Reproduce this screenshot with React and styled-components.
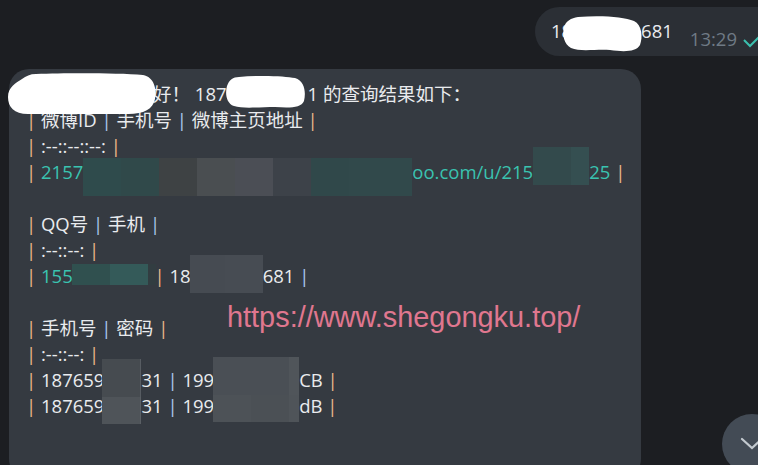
import React from "react";
import styled, { createGlobalStyle } from "styled-components";

const GlobalStyle = createGlobalStyle`
  html, body {
    margin: 0;
    background: #1c1e22;
    overflow: hidden;
  }
`;

const Page = styled.div`
  position: relative;
  width: 758px;
  height: 465px;
  overflow: hidden;
  background: #1c1e22;
  font-family: "Open Sans", "Noto Sans CJK SC", sans-serif;
  font-size: 18.5px;
  color: #e9ebee;
`;

const Chat = styled.div`
  display: flex;
  flex-direction: column;
  padding-top: 7px;
`;

const OutRow = styled.div`
  display: flex;
  justify-content: flex-end;
  margin-right: -36px;
`;

const OutBubble = styled.div`
  display: flex;
  align-items: flex-start;
  box-sizing: border-box;
  height: 49px;
  padding: 11px 30px 0 16px;
  background: #2b2f35;
  border-radius: 25px;
  line-height: 26px;
  white-space: pre;
`;

const Time = styled.span`
  margin-left: 17px;
  margin-top: 8px;
  color: #6f7a85;
`;

const Tick = styled.svg`
  margin-left: 5px;
  margin-top: 14px;
  flex: none;
`;

const InBubble = styled.div`
  box-sizing: border-box;
  width: 632px;
  margin: 13px 0 0 9px;
  padding: 12px 0 60px 17px;
  background: #353a41;
  border-radius: 20px;
`;

const Line = styled.div`
  height: 26px;
  line-height: 26px;
  white-space: pre;
`;

const Pipe = styled.span`
  color: ${(p) => (p.$blue ? "#a9c6ef" : "#ebb68a")};
`;

const Link = styled.span`
  color: #3ac3b0;
`;

const Redact = styled.span`
  position: relative;
  display: inline-block;
  width: ${(p) => p.$w}px;
  height: 0;
`;

const MosaicBox = styled.span`
  position: absolute;
  left: ${(p) => p.$x}px;
  top: ${(p) => p.$y}px;
  display: grid;
  grid-template-columns: ${(p) => p.$cols.map((c) => c + "px").join(" ")};
  grid-template-rows: ${(p) => p.$rows.map((r) => r + "px").join(" ")};
  z-index: 2;
`;

const Tile = styled.span`
  background: ${(p) => p.$c};
`;

const Blot = styled.svg`
  position: absolute;
  left: ${(p) => p.$x}px;
  top: ${(p) => p.$y}px;
  z-index: 2;
`;

const Watermark = styled.div`
  position: absolute;
  left: 227px;
  top: 303px;
  font-family: "Liberation Sans", Arial, sans-serif;
  font-size: 28.9px;
  line-height: 1;
  color: #e0778f;
  white-space: nowrap;
`;

const ScrollDown = styled.div`
  position: absolute;
  left: 722px;
  top: 414px;
  width: 60px;
  height: 60px;
  border-radius: 50%;
  background: #434b55;
  display: flex;
  justify-content: center;
  padding-top: 22px;
  box-sizing: border-box;
`;

const Mosaic = ({ x, y, cols, rows, colors }) => (
  <MosaicBox $x={x} $y={y} $cols={cols} $rows={rows}>
    {colors.map((c, i) => (
      <Tile key={i} $c={c} />
    ))}
  </MosaicBox>
);

const WhiteBlot = ({ x, y, w, h, d }) => (
  <Blot $x={x} $y={y} width={w} height={h} viewBox={`0 0 ${w} ${h}`}>
    <path d={d} fill="#ffffff" />
  </Blot>
);

// blue: indexes of the pipes (0 = leading one) that render bluish in the capture
const TableRow = ({ cells, blue = [] }) => (
  <Line>
    <Pipe $blue={blue.includes(0)}>|</Pipe>
    {cells.map((c, i) => (
      <React.Fragment key={i}>
        {" "}
        {c}
        {" "}
        <Pipe $blue={blue.includes(i + 1)}>|</Pipe>
      </React.Fragment>
    ))}
  </Line>
);

export default function App() {
  return (
    <Page>
      <GlobalStyle />
      <Chat>
        <OutRow>
          <OutBubble>
            <span>
              18
              <Redact $w={69}>
                <WhiteBlot
                  x={-10}
                  y={-23}
                  w={82}
                  h={38}
                  d="M16,2 C40,0 62,2 72,6 C80,10 81,22 78,30 C74,37 62,37 48,35 C34,34 18,37 9,33 C2,29 0,20 2,12 C4,6 9,3 16,2 Z"
                />
              </Redact>
              681
            </span>
            <Time>13:29</Time>
            <Tick width="22" height="16" viewBox="0 0 22 16">
              <path d="M2 8 L8 14 L20 2" fill="none" stroke="#3bbfae" strokeWidth="2" />
            </Tick>
          </OutBubble>
        </OutRow>

        <InBubble>
          <Line>
            <Redact $w={127}>
              <WhiteBlot
                x={-18}
                y={-28}
                w={150}
                h={42}
                d="M28,1 C60,0 110,0 135,2 C146,4 149,16 147,26 C145,36 136,41 120,41 L20,41 C6,41 0,34 0,24 C0,14 8,10 14,6 C18,3 22,1 28,1 Z"
              />
            </Redact>
            好！ 187
            <Redact $w={81}>
              <WhiteBlot
                x={-2}
                y={-26}
                w={82}
                h={34}
                d="M14,2 C35,0 60,1 70,3 C80,6 81,18 79,26 C76,33 65,33 50,32 C35,32 18,34 9,31 C1,28 0,18 2,11 C4,5 8,2 14,2 Z"
              />
            </Redact>
            1 的查询结果如下：
          </Line>
          <TableRow cells={["微博ID", "手机号", "微博主页地址"]} blue={[1, 2]} />
          <TableRow cells={[":--::--::--:"]} />
          <TableRow
            cells={[
              <>
                <Link>2157</Link>
                <Redact $w={329}>
                  <Mosaic
                    x={0}
                    y={-21}
                    cols={[38, 38, 38, 38, 38, 38, 38, 38, 25]}
                    rows={[38]}
                    colors={["#2f4b4c", "#30494a", "#3e4244", "#4a4e51", "#4b4e55", "#3d4249", "#30484a", "#31494b", "#31494b"]}
                  />
                </Redact>
                <Link>oo.com/u/215</Link>
                <Redact $w={56}>
                  <Mosaic x={0} y={-32} cols={[38, 18]} rows={[38]} colors={["#334a4c", "#354f51"]} />
                </Redact>
                <Link>25</Link>
              </>,
            ]}
          />
          <Line />
          <TableRow cells={["QQ号", "手机"]} blue={[1, 2]} />
          <TableRow cells={[":--::--:"]} />
          <TableRow
            blue={[2]}
            cells={[
              <>
                <Link>155</Link>
                <Redact $w={77}>
                  <Mosaic x={-1} y={-19} cols={[38, 38, 8]} rows={[21]} colors={["#30504f", "#345a59", "#323d41"]} />
                </Redact>
              </>,
              <>
                18
                <Redact $w={72}>
                  <Mosaic x={-1} y={-28} cols={[35, 38]} rows={[38]} colors={["#464b52", "#474c53"]} />
                </Redact>
                681
              </>,
            ]}
          />
          <Line />
          <TableRow cells={["手机号", "密码"]} blue={[1]} />
          <TableRow cells={[":--::--:"]} />
          <TableRow
            blue={[1]}
            cells={[
              <>
                187659
                <Redact $w={37}>
                  <Mosaic
                    x={-2}
                    y={-28}
                    cols={[38, 1]}
                    rows={[38, 27]}
                    colors={["#464b50", "#575c62", "#4f5459", "#5a5f64"]}
                  />
                </Redact>
                31
              </>,
              <>
                199
                <Redact $w={85}>
                  <Mosaic
                    x={-1}
                    y={-30}
                    cols={[38, 38, 10]}
                    rows={[38, 27]}
                    colors={["#4a4f55", "#4a4f55", "#50555a", "#4d5257", "#4b5055", "#4f5459"]}
                  />
                </Redact>
                CB
              </>,
            ]}
          />
          <TableRow
            blue={[1]}
            cells={[
              <>
                187659
                <Redact $w={37} />
                31
              </>,
              <>
                199
                <Redact $w={85} />
                dB
              </>,
            ]}
          />
        </InBubble>
      </Chat>

      <Watermark>https://www.shegongku.top/</Watermark>

      <ScrollDown>
        <svg width="26" height="16" viewBox="0 0 26 16">
          <path d="M3 3 L13 12 L23 3" fill="none" stroke="#c3c9cf" strokeWidth="2.2" strokeLinecap="round" />
        </svg>
      </ScrollDown>
    </Page>
  );
}
